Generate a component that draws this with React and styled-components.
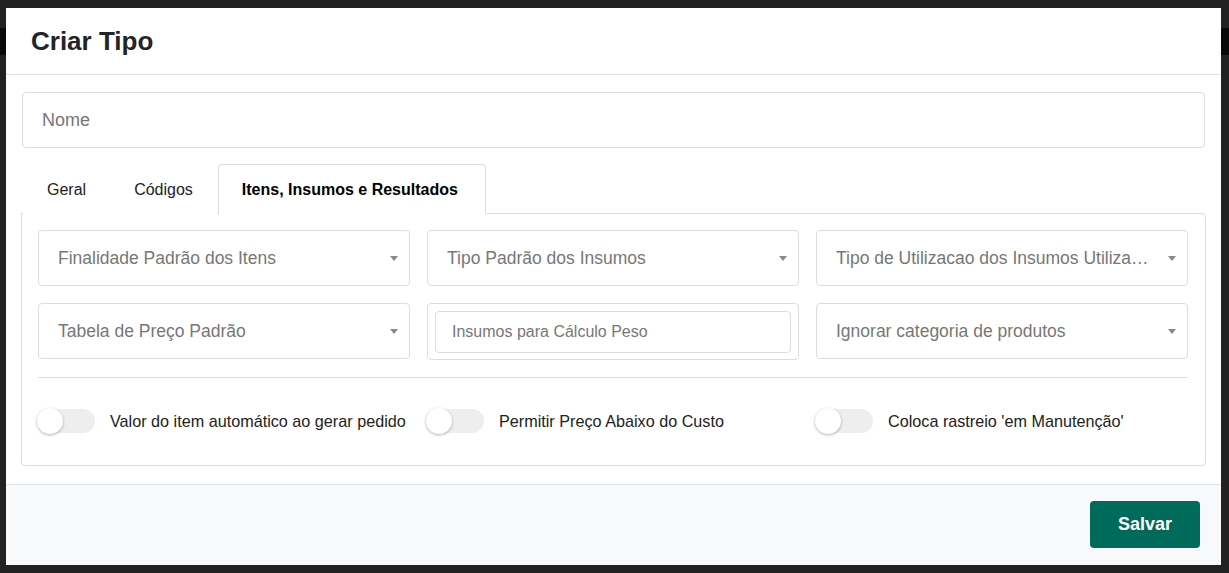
import React, { useState } from "react";
import styled, { createGlobalStyle } from "styled-components";

const GlobalStyle = createGlobalStyle`
  * { box-sizing: border-box; }
  html, body { margin: 0; height: 100%; }
  body {
    padding: 8px 8px 0 6px;
    font-family: "Liberation Sans", Arial, sans-serif;
    background: linear-gradient(
      to bottom,
      #212121 0,
      #212121 28px,
      #090909 28px,
      #090909 55px,
      #212121 55px
    );
  }
`;

const Modal = styled.div`
  width: 1215px;
  height: 557px;
  background: #fff;
  display: flex;
  flex-direction: column;
`;

const Header = styled.div`
  height: 67px;
  display: flex;
  align-items: center;
  padding: 0 25px;
  border-bottom: 1px solid #dee2e6;
`;

const Title = styled.h1`
  margin: 0;
  font-size: 26px;
  font-weight: 700;
  color: #212529;
`;

const Body = styled.div`
  padding: 17px 16px 18px 16px;
  display: flex;
  flex-direction: column;
`;

const NameInput = styled.input`
  height: 56px;
  width: 100%;
  border: 1px solid #dcdcdc;
  border-radius: 4px;
  padding: 0 19px;
  font-family: inherit;
  font-size: 18px;
  color: #333;
  outline: none;
  &::placeholder { color: #777; }
`;

const TabList = styled.div`
  display: flex;
  margin-top: 16px;
  padding-left: 1px;
  margin-bottom: -1px;
  position: relative;
  z-index: 1;
`;

const Tab = styled.button`
  height: 50px;
  padding: ${(p) => (p.$active ? "1px 27px 0 23px" : "1px 23px 0")};
  margin-left: ${(p) => (p.$active ? "1px" : "0")};
  font-family: inherit;
  font-size: 16px;
  font-weight: ${(p) => (p.$active ? 700 : 400)};
  color: ${(p) => (p.$active ? "#000" : "#222")};
  background: #fff;
  border: 1px solid ${(p) => (p.$active ? "#dcdcdc" : "transparent")};
  border-bottom-color: ${(p) => (p.$active ? "#fff" : "transparent")};
  border-radius: 4px 4px 0 0;
  cursor: pointer;
`;

const Panel = styled.div`
  margin: 0 -1px;
  border: 1px solid #dcdcdc;
  border-radius: 0 4px 4px 4px;
  padding: 16px 17px 32px 16px;
`;

const Grid = styled.div`
  display: grid;
  grid-template-columns: repeat(3, 1fr);
  gap: 17px;
`;

const SelectBox = styled.div`
  height: 56px;
  border: 1px solid #dcdcdc;
  border-radius: 4px;
  display: flex;
  align-items: center;
  padding: 0 11px 0 19px;
  gap: 14px;
  min-width: 0;
`;

const SelectText = styled.span`
  flex: 1;
  min-width: 0;
  font-size: 17.5px;
  color: #777;
  white-space: nowrap;
  overflow: hidden;
  text-overflow: ellipsis;
`;

const Caret = styled.span`
  width: 0;
  height: 0;
  border-left: 4.5px solid transparent;
  border-right: 4.5px solid transparent;
  border-top: 5px solid #888;
`;

const FieldBox = styled.div`
  height: 57px;
  border: 1px solid #dcdcdc;
  border-radius: 4px;
  padding: 7px;
`;

const InnerInput = styled.input`
  width: 100%;
  height: 42px;
  border: 1px solid #dcdcdc;
  border-radius: 4px;
  padding: 0 16px;
  font-family: inherit;
  font-size: 16px;
  outline: none;
  &::placeholder { color: #777; }
`;

const Divider = styled.hr`
  margin: 17px 0 31px;
  border: 0;
  border-top: 1px solid #dcdcdc;
`;

const ToggleRow = styled.label`
  display: flex;
  align-items: center;
  gap: 15px;
  cursor: pointer;
  margin-left: -1px;
`;

const Track = styled.span`
  position: relative;
  width: 58px;
  height: 24px;
  border-radius: 12px;
  background: ${(p) => (p.$on ? "#80b5ad" : "#eee")};
  flex-shrink: 0;
`;

const Thumb = styled.span`
  position: absolute;
  top: -1px;
  left: ${(p) => (p.$on ? "32px" : "0")};
  width: 26px;
  height: 26px;
  border-radius: 50%;
  background: ${(p) => (p.$on ? "#006b5a" : "#fff")};
  box-shadow: 0 1px 3px rgba(0, 0, 0, 0.3);
`;

const ToggleLabel = styled.span`
  font-size: 16.2px;
  color: #222;
  white-space: nowrap;
`;

const Footer = styled.div`
  margin-top: auto;
  flex: 1;
  background: #f8f9fa;
  border-top: 1px solid #dee2e6;
  display: flex;
  justify-content: flex-end;
  align-items: flex-start;
  padding: 16px 21px 0 0;
`;

const SaveButton = styled.button`
  height: 47px;
  padding: 0 28px;
  border: 0;
  border-radius: 4px;
  background: #006b5a;
  color: #fff;
  font-family: inherit;
  font-size: 18px;
  font-weight: 700;
  cursor: pointer;
`;

function Select({ label }) {
  return (
    <SelectBox>
      <SelectText>{label}</SelectText>
      <Caret />
    </SelectBox>
  );
}

function Toggle({ label }) {
  const [on, setOn] = useState(false);
  return (
    <ToggleRow onClick={() => setOn(!on)}>
      <Track $on={on}>
        <Thumb $on={on} />
      </Track>
      <ToggleLabel>{label}</ToggleLabel>
    </ToggleRow>
  );
}

const TABS = ["Geral", "Códigos", "Itens, Insumos e Resultados"];

export default function App() {
  const [tab, setTab] = useState(2);

  return (
    <>
      <GlobalStyle />
      <Modal>
        <Header>
          <Title>Criar Tipo</Title>
        </Header>
        <Body>
          <NameInput placeholder="Nome" />
          <TabList>
            {TABS.map((t, i) => (
              <Tab key={t} $active={tab === i} onClick={() => setTab(i)}>
                {t}
              </Tab>
            ))}
          </TabList>
          <Panel>
            <Grid>
              <Select label="Finalidade Padrão dos Itens" />
              <Select label="Tipo Padrão dos Insumos" />
              <Select label="Tipo de Utilizacao dos Insumos Utilizados" />
              <Select label="Tabela de Preço Padrão" />
              <FieldBox>
                <InnerInput placeholder="Insumos para Cálculo Peso" />
              </FieldBox>
              <Select label="Ignorar categoria de produtos" />
            </Grid>
            <Divider />
            <Grid>
              <Toggle label="Valor do item automático ao gerar pedido" />
              <Toggle label="Permitir Preço Abaixo do Custo" />
              <Toggle label="Coloca rastreio 'em Manutenção'" />
            </Grid>
          </Panel>
        </Body>
        <Footer>
          <SaveButton>Salvar</SaveButton>
        </Footer>
      </Modal>
    </>
  );
}
